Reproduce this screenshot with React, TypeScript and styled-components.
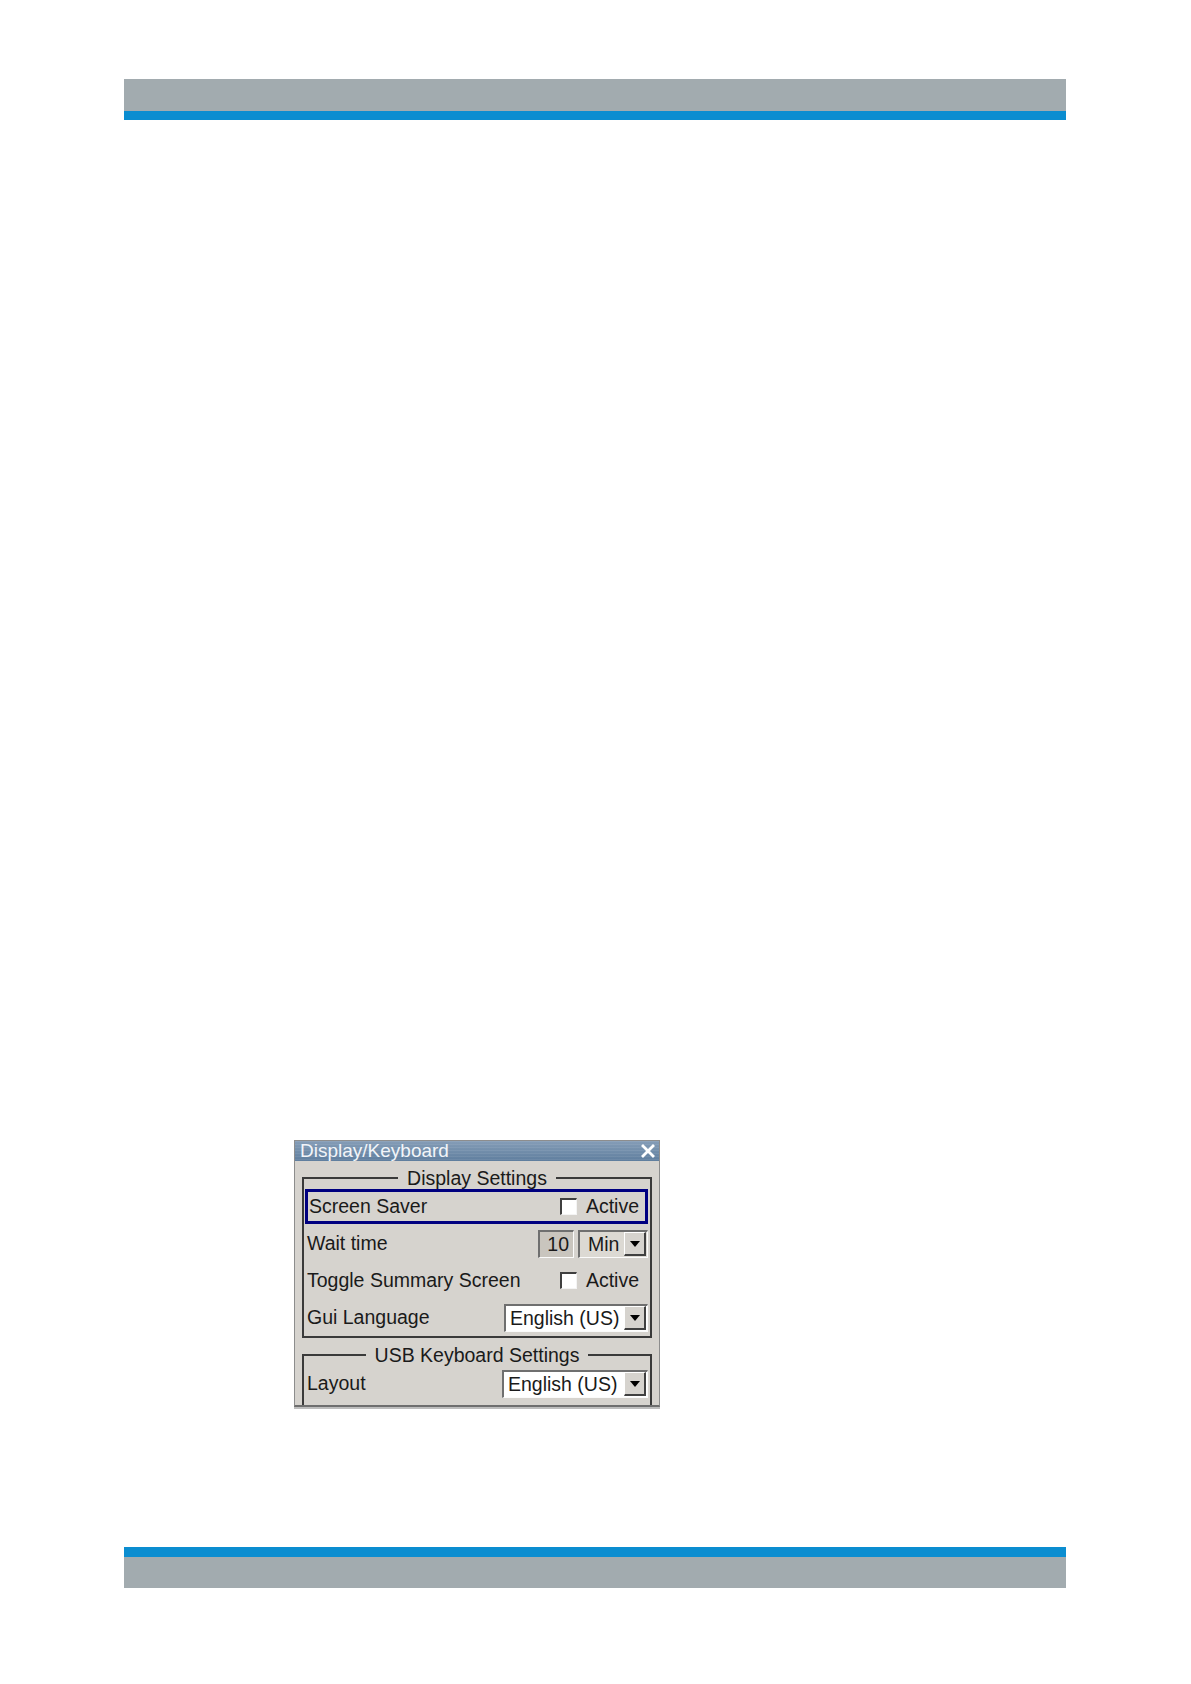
import React from "react";
import styled, { createGlobalStyle } from "styled-components";

const GlobalStyle = createGlobalStyle`
  html, body {
    margin: 0;
    padding: 0;
    background: #ffffff;
  }
`;

const Page = styled.div`
  width: 1191px;
  min-height: 1684px;
  box-sizing: border-box;
  padding: 79px 125px 0 124px;
  display: flex;
  flex-direction: column;
`;

const Band = styled.div<{ $edge: "top" | "bottom" }>`
  height: ${(p) => (p.$edge === "top" ? "32px" : "31px")};
  background: #a2abaf;
  border-${(p) => (p.$edge === "top" ? "bottom" : "top")}: ${(p) =>
    p.$edge === "top" ? "9px" : "10px"} solid #0b8dd0;
`;

const Content = styled.main`
  padding: 1020px 0 0 170px;
  margin-bottom: 140px;
`;

const Dialog = styled.div`
  width: 366px;
  height: 267px;
  box-sizing: border-box;
  background: #d6d3ce;
  border: 1px solid #8d8d8d;
  border-bottom: 2px solid #6e6e6e;
  box-shadow: 0 2px 0 #bdbdbd;
  overflow: hidden;
  font-family: "Liberation Sans", Arial, sans-serif;
  font-size: 19.5px;
  color: #1a1a1a;
`;

const TitleBar = styled.div`
  height: 20px;
  display: flex;
  align-items: center;
  justify-content: space-between;
  padding: 0 4px 0 5px;
  background: repeating-linear-gradient(
      180deg,
      rgba(255, 255, 255, 0.07) 0 1px,
      transparent 1px 3px
    ),
    linear-gradient(180deg, #859db7, #5f7e9e);
  color: #f2f5f9;
  font-size: 19px;
  line-height: 20px;
`;

const Body = styled.div`
  padding: 0 7px;
`;

const Group = styled.fieldset<{ $open?: boolean }>`
  margin: 6px 0 0;
  padding: 0 2px ${(p) => (p.$open ? "20px" : "0")};
  border: 2px solid #3a3a3a;
  min-width: 0;
`;

const Legend = styled.legend`
  margin: 0 auto;
  padding: 0 9px;
  line-height: 22px;
`;

const Row = styled.div<{ $focused?: boolean; $gapAfter?: number }>`
  height: 35px;
  box-sizing: border-box;
  display: flex;
  align-items: center;
  justify-content: space-between;
  margin-bottom: ${(p) => p.$gapAfter ?? 2}px;
  border: ${(p) => (p.$focused ? "3px solid #000080" : "none")};
  margin-left: ${(p) => (p.$focused ? "-1px" : "0")};
  padding-left: 1px;
`;

const Label = styled.span`
  white-space: nowrap;
`;

const Controls = styled.div`
  display: flex;
  align-items: center;
  gap: 4px;
`;

const CheckGroup = styled.label<{ $inset: number }>`
  display: flex;
  align-items: center;
  gap: 9px;
  padding-right: ${(p) => p.$inset}px;
`;

const Check = styled.span`
  width: 14px;
  height: 14px;
  background: #ffffff;
  border-top: 2px solid #3f3f3f;
  border-left: 2px solid #3f3f3f;
  border-bottom: 1px solid #f4f4f4;
  border-right: 1px solid #f4f4f4;
`;

const Sunken = styled.div<{ $width: number; $fill: string }>`
  width: ${(p) => p.$width}px;
  height: 28px;
  box-sizing: border-box;
  display: flex;
  align-items: center;
  background: ${(p) => p.$fill};
  border-top: 2px solid #6f6f6f;
  border-left: 2px solid #6f6f6f;
  border-bottom: 1px solid #fbfbfb;
  border-right: 1px solid #fbfbfb;
`;

const NumText = styled.span`
  flex: 1;
  text-align: right;
  padding-right: 4px;
`;

const ComboText = styled.span<{ $indent: number }>`
  flex: 1;
  padding-left: ${(p) => p.$indent}px;
  white-space: nowrap;
`;

const ArrowButton = styled.span`
  width: 22px;
  height: 24px;
  box-sizing: border-box;
  margin-right: 1px;
  display: flex;
  align-items: center;
  justify-content: center;
  background: #d6d3ce;
  border-top: 1px solid #ffffff;
  border-left: 1px solid #ffffff;
  border-bottom: 2px solid #404040;
  border-right: 2px solid #404040;

  &::after {
    content: "";
    border-left: 5px solid transparent;
    border-right: 5px solid transparent;
    border-top: 6px solid #000000;
  }
`;

const CloseIcon = () => (
  <svg width="14" height="14" viewBox="0 0 14 14">
    <path d="M2 2 L12 12 M12 2 L2 12" stroke="#ffffff" strokeWidth="2.8" strokeLinecap="square" />
  </svg>
);

const Combo = ({
  width,
  value,
  fill,
  indent = 4,
}: {
  width: number;
  value: string;
  fill: string;
  indent?: number;
}) => (
  <Sunken $width={width} $fill={fill}>
    <ComboText $indent={indent}>{value}</ComboText>
    <ArrowButton />
  </Sunken>
);

const Checkbox = ({ inset }: { inset: number }) => (
  <CheckGroup $inset={inset}>
    <Check />
    <span>Active</span>
  </CheckGroup>
);

export default function App() {
  return (
    <>
      <GlobalStyle />
      <Page>
        <Band $edge="top" />
        <Content>
          <Dialog>
            <TitleBar>
              <span>Display/Keyboard</span>
              <CloseIcon />
            </TitleBar>
            <Body>
              <Group>
                <Legend>Display Settings</Legend>
                <Row $focused $gapAfter={2}>
                  <Label>Screen Saver</Label>
                  <Checkbox inset={6} />
                </Row>
                <Row>
                  <Label>Wait time</Label>
                  <Controls>
                    <Sunken $width={36} $fill="#c9c5be">
                      <NumText>10</NumText>
                    </Sunken>
                    <Combo width={70} value="Min" fill="#dcd9d3" indent={8} />
                  </Controls>
                </Row>
                <Row>
                  <Label>Toggle Summary Screen</Label>
                  <Checkbox inset={9} />
                </Row>
                <Row $gapAfter={1}>
                  <Label>Gui Language</Label>
                  <Combo width={144} value="English (US)" fill="#ffffff" />
                </Row>
              </Group>
              <Group $open>
                <Legend>USB Keyboard Settings</Legend>
                <Row $gapAfter={0}>
                  <Label>Layout</Label>
                  <Combo width={146} value="English (US)" fill="#ffffff" />
                </Row>
              </Group>
            </Body>
          </Dialog>
        </Content>
        <Band $edge="bottom" />
      </Page>
    </>
  );
}
